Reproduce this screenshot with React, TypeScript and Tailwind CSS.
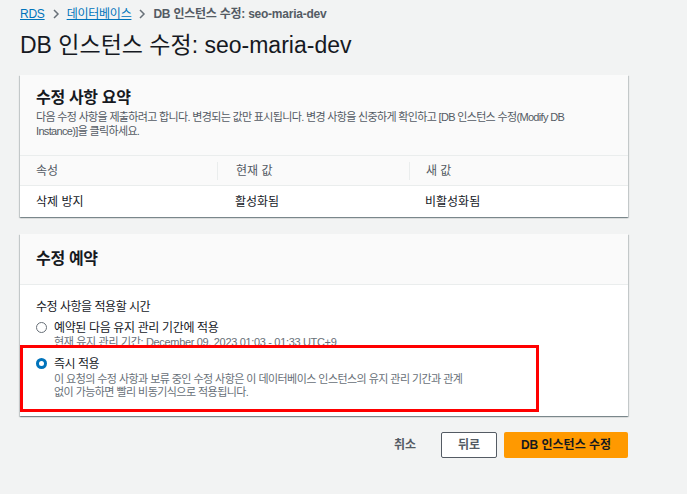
import React from 'react'

const font = { fontFamily: '"Liberation Sans", "Noto Sans CJK KR", sans-serif' }

function Chevron() {
  return (
    <svg width="8" height="12" viewBox="0 0 8 12" className="mx-[7px] text-[#687078]">
      <path d="M2 2 L6 6 L2 10" fill="none" stroke="currentColor" strokeWidth="1.5" />
    </svg>
  )
}

function Radio({ checked }: { checked?: boolean }) {
  if (checked) {
    return (
      <span className="mt-[2px] w-[11px] h-[11px] rounded-full bg-[#0073bb] flex items-center justify-center shrink-0">
        <span className="w-[5px] h-[5px] rounded-full bg-white" />
      </span>
    )
  }
  return <span className="mt-[2px] w-[11px] h-[11px] rounded-full border border-[#687078] bg-white shrink-0" />
}

export default function App() {
  return (
    <div className="min-h-[494px] bg-[#f2f3f3] text-[#16191f] pt-[6px] pb-8" style={font}>
      <div className="ml-5 w-[608px]">
        {/* breadcrumb */}
        <div className="flex items-center h-[16px] text-[12px] tracking-[-0.02em]">
          <span className="text-[#0073bb] underline">RDS</span>
          <Chevron />
          <span className="text-[#0073bb] underline">데이터베이스</span>
          <Chevron />
          <span className="text-[#545b64] font-bold">DB 인스턴스 수정: seo-maria-dev</span>
        </div>

        <h1 className="mt-[8px] text-[23px] leading-[30px]">DB 인스턴스 수정: seo-maria-dev</h1>

        {/* summary */}
        <div className="mt-[15px] bg-white shadow-[0_1px_1px_0_rgba(0,28,36,0.3),1px_1px_1px_0_rgba(0,28,36,0.15),-1px_1px_1px_0_rgba(0,28,36,0.15)]">
          <div className="bg-[#fafafa] px-4 pt-[13px] pb-[17px] border-b border-[#eaeded]">
            <h2 className="text-[16px] leading-[20px] font-bold tracking-[-0.02em]">수정 사항 요약</h2>
            <p className="mt-[2px] text-[11px] leading-[14px] text-[#545b64] tracking-[-0.06em]">
              다음 수정 사항을 제출하려고 합니다. 변경되는 값만 표시됩니다. 변경 사항을 신중하게 확인하고 [DB 인스턴스 수정(Modify DB
              <br />
              Instance)]을 클릭하세요.
            </p>
          </div>
          <div className="grid grid-cols-[197px_192px_1fr] bg-[#fafafa] border-b border-[#eaeded] h-[30px] items-center text-[12px] text-[#545b64]">
            <div className="pl-4">속성</div>
            <div className="pl-[18px] border-l border-[#eaeded] h-[18px] flex items-center">현재 값</div>
            <div className="pl-4 border-l border-[#eaeded] h-[18px] flex items-center">새 값</div>
          </div>
          <div className="grid grid-cols-[197px_192px_1fr] h-[31px] items-center text-[12px] text-[#16191f]">
            <div className="pl-4">삭제 방지</div>
            <div className="pl-[18px]">활성화됨</div>
            <div className="pl-4">비활성화됨</div>
          </div>
        </div>

        {/* schedule */}
        <div className="mt-[17px] bg-white shadow-[0_1px_1px_0_rgba(0,28,36,0.3),1px_1px_1px_0_rgba(0,28,36,0.15),-1px_1px_1px_0_rgba(0,28,36,0.15)]">
          <div className="bg-[#fafafa] h-[51px] px-4 flex items-center border-b border-[#eaeded]">
            <h2 className="text-[16px] font-bold tracking-[-0.02em]">수정 예약</h2>
          </div>
          <div className="pt-[14px] pb-[4px] px-4 text-[12px]">
            <div className="leading-[16px] tracking-[-0.04em]">수정 사항을 적용할 시간</div>
            <div className="mt-[5px] flex gap-[7px]">
              <Radio />
              <div>
                <div className="leading-[16px] tracking-[-0.03em]">예약된 다음 유지 관리 기간에 적용</div>
                <div className="text-[11px] leading-[13px] text-[#687078] tracking-[-0.03em]">
                  현재 유지 관리 기간: December 09, 2023 01:03 - 01:33 UTC+9
                </div>
              </div>
            </div>
            <div className="relative -mt-[4px] -ml-4 w-[519px] bg-white border-[3px] border-[#ff0000] pl-[13px] pt-[8px] pb-[10px] flex gap-[7px]">
              <Radio checked />
              <div>
                <div className="leading-[16px] tracking-[-0.04em]">즉시 적용</div>
                <div className="mt-[1px] text-[11px] leading-[13px] text-[#687078] tracking-[-0.05em]">
                  이 요청의 수정 사항과 보류 중인 수정 사항은 이 데이터베이스 인스턴스의 유지 관리 기간과 관계
                  <br />
                  없이 가능하면 빨리 비동기식으로 적용됩니다.
                </div>
              </div>
            </div>
          </div>
        </div>

        {/* actions */}
        <div className="mt-[16px] flex justify-end items-center gap-[7px] text-[12px] font-bold">
          <button className="pl-[20px] pr-[18px] h-[26px] text-[#545b64]">취소</button>
          <button className="w-[56px] h-[26px] border border-[#545b64] bg-white text-[#545b64] rounded-[2px]">뒤로</button>
          <button className="w-[124px] h-[26px] bg-[#ff9900] text-[#16191f] rounded-[2px]">DB 인스턴스 수정</button>
        </div>
      </div>
    </div>
  )
}
